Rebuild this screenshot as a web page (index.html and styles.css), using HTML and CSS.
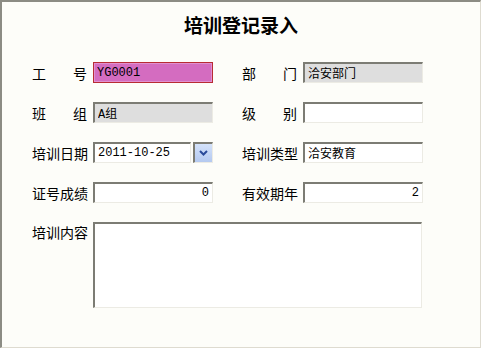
FILE: index.html
```html
<!DOCTYPE html>
<html lang="zh-CN">
<head>
    <meta charset="UTF-8">
    <meta name="viewport" content="width=device-width, initial-scale=1.0">
    <title>培训登记录入</title>
    <link rel="stylesheet" href="styles.css">
</head>
<body>
    <div class="frame">
        <h1 class="title">培训登记录入</h1>
        <div class="form">
            <div class="field">
                <label class="lbl spread"><span>工</span><span>号</span></label>
                <input class="box pink" type="text" value="YG0001">
            </div>
            <div class="field">
                <label class="lbl spread"><span>部</span><span>门</span></label>
                <input class="box gray" type="text" value="洽安部门" readonly>
            </div>
            <div class="field">
                <label class="lbl spread"><span>班</span><span>组</span></label>
                <input class="box gray" type="text" value="A组" readonly>
            </div>
            <div class="field">
                <label class="lbl spread"><span>级</span><span>别</span></label>
                <input class="box" type="text" value="">
            </div>
            <div class="field">
                <label class="lbl">培训日期</label>
                <div class="date">
                    <input class="box" type="text" value="2011-10-25">
                    <span class="drop">
                        <svg width="9" height="6" viewBox="0 0 9 6"><path d="M1 1 L4.5 4.5 L8 1" fill="none" stroke="#2a4a9a" stroke-width="2"/></svg>
                    </span>
                </div>
            </div>
            <div class="field">
                <label class="lbl">培训类型</label>
                <input class="box" type="text" value="洽安教育">
            </div>
            <div class="field">
                <label class="lbl">证号成绩</label>
                <input class="box num" type="text" value="0">
            </div>
            <div class="field">
                <label class="lbl">有效期年</label>
                <input class="box num" type="text" value="2">
            </div>
            <div class="field wide">
                <label class="lbl">培训内容</label>
                <textarea class="box memo"></textarea>
            </div>
        </div>
    </div>
</body>
</html>
```

FILE: styles.css
```css
body {
    margin: 0;
    font-family: "Noto Sans CJK SC", "Liberation Sans", sans-serif;
    background: #ffffff;
}
.frame {
    width: 481px;
    height: 348px;
    box-sizing: border-box;
    background: #fdfdf9;
    border-top: 2px solid #8c8c84;
    border-left: 2px solid #8c8c84;
    border-right: 1px solid #dedbd0;
    border-bottom: 1px solid #dedbd0;
}
.title {
    margin: 0;
    padding-top: 10px;
    text-align: center;
    font-size: 19px;
    line-height: 26px;
    font-weight: bold;
    color: #000;
}
.form {
    margin: 24px 0 0 30px;
    display: grid;
    grid-template-columns: 181px 181px;
    column-gap: 29px;
    row-gap: 19px;
}
.field {
    display: flex;
    align-items: center;
    gap: 5px;
    height: 21px;
}
.field.wide {
    grid-column: 1 / 3;
    align-items: flex-start;
    height: 86px;
}
.lbl {
    width: 56px;
    flex: none;
    font-size: 14px;
    line-height: 16px;
    color: #000;
    white-space: nowrap;
}
.wide .lbl {
    margin-top: 2px;
}
.spread {
    display: flex;
    justify-content: space-between;
    padding-right: 1px;
    box-sizing: border-box;
}
.box {
    width: 120px;
    height: 21px;
    box-sizing: border-box;
    margin: 0;
    padding: 0 3px;
    font-family: "Liberation Mono", "Noto Sans CJK SC", monospace;
    font-size: 12px;
    color: #000;
    background: #ffffff;
    border-style: solid;
    border-width: 2px 1px 1px 2px;
    border-color: #7c7c74 #ecebe4 #ecebe4 #7c7c74;
    outline: none;
}
.pink {
    background: #d46cc0;
    border: 1px solid #b82c34;
    box-shadow: inset 0 0 0 1px #e090d0;
}
.gray {
    background: #dedede;
}
.num {
    text-align: right;
}
.date {
    display: flex;
    gap: 2px;
}
.date .box {
    width: 98px;
}
.drop {
    width: 20px;
    height: 21px;
    box-sizing: border-box;
    display: flex;
    align-items: center;
    justify-content: center;
    background: linear-gradient(#d4e2fa, #b4c9f0);
    border-style: solid;
    border-width: 2px 1px 1px 2px;
    border-color: #7c7c74 #ecebe4 #ecebe4 #7c7c74;
}
.memo {
    width: 329px;
    height: 86px;
    resize: none;
}
```
